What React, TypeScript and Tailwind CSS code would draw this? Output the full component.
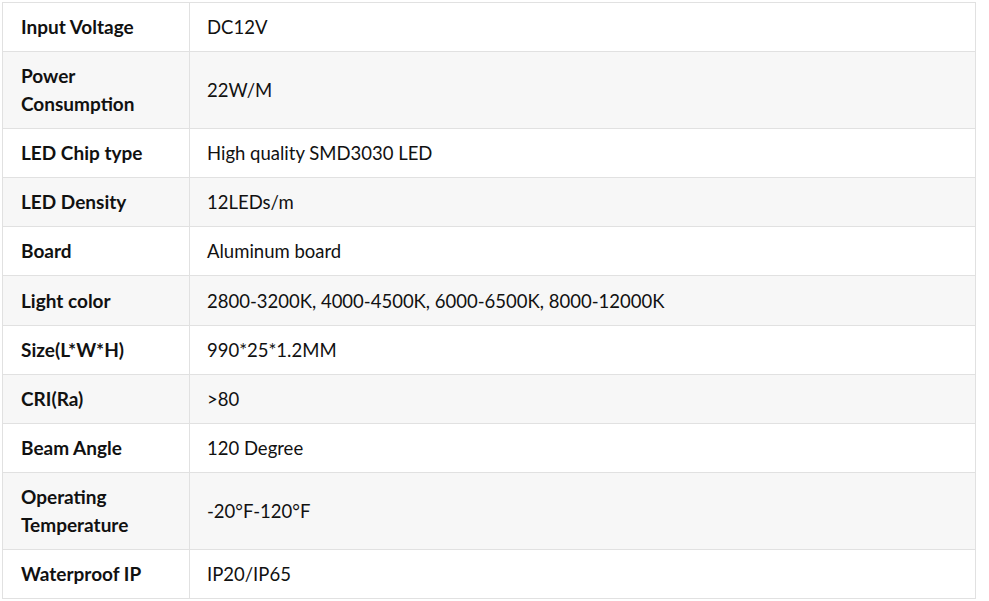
const specs: [string, string][] = [
  ['Input Voltage', 'DC12V'],
  ['Power Consumption', '22W/M'],
  ['LED Chip type', 'High quality SMD3030 LED'],
  ['LED Density', '12LEDs/m'],
  ['Board', 'Aluminum board'],
  ['Light color', '2800-3200K, 4000-4500K, 6000-6500K, 8000-12000K'],
  ['Size(L*W*H)', '990*25*1.2MM'],
  ['CRI(Ra)', '>80'],
  ['Beam Angle', '120 Degree'],
  ['Operating Temperature', '-20°F-120°F'],
  ['Waterproof IP', 'IP20/IP65'],
];

export default function App() {
  return (
    <div className="bg-white pl-[2px] pt-[2px] font-['Lato',sans-serif] text-[18.5px] leading-[28px] text-[#111]">
      <table className="w-[974px] border-collapse table-fixed">
        <colgroup>
          <col className="w-[187px]" />
          <col />
        </colgroup>
        <tbody>
          {specs.map(([label, value], i) => (
            <tr key={label} className={i % 2 === 1 ? 'bg-[#f7f7f7]' : 'bg-white'}>
              <td className="border border-[#e1e1e1] px-[18px] py-[10.05px] text-[19px] font-bold align-middle">{label}</td>
              <td className="border border-[#e1e1e1] px-[17px] py-[10.05px] align-middle">{value}</td>
            </tr>
          ))}
        </tbody>
      </table>
    </div>
  );
}
